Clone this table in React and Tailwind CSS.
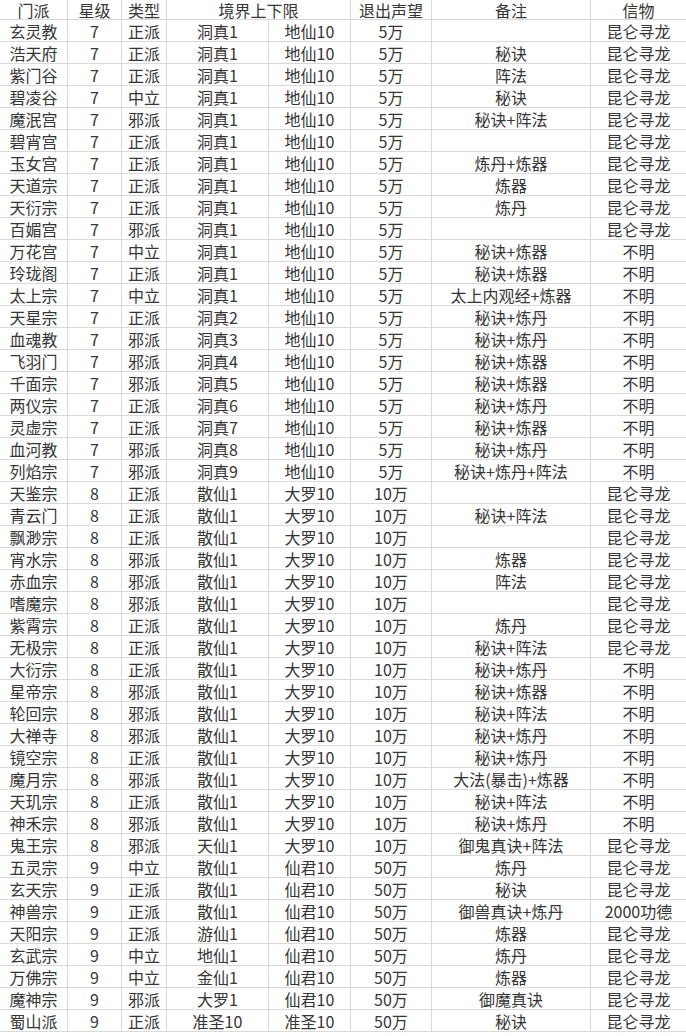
import React from "react";

const rows = [
  ["玄灵教", "7", "正派", "洞真1", "地仙10", "5万", "", "昆仑寻龙"],
  ["浩天府", "7", "正派", "洞真1", "地仙10", "5万", "秘诀", "昆仑寻龙"],
  ["紫门谷", "7", "正派", "洞真1", "地仙10", "5万", "阵法", "昆仑寻龙"],
  ["碧凌谷", "7", "中立", "洞真1", "地仙10", "5万", "秘诀", "昆仑寻龙"],
  ["魔泯宫", "7", "邪派", "洞真1", "地仙10", "5万", "秘诀+阵法", "昆仑寻龙"],
  ["碧宵宫", "7", "正派", "洞真1", "地仙10", "5万", "", "昆仑寻龙"],
  ["玉女宫", "7", "正派", "洞真1", "地仙10", "5万", "炼丹+炼器", "昆仑寻龙"],
  ["天道宗", "7", "正派", "洞真1", "地仙10", "5万", "炼器", "昆仑寻龙"],
  ["天衍宗", "7", "正派", "洞真1", "地仙10", "5万", "炼丹", "昆仑寻龙"],
  ["百媚宫", "7", "邪派", "洞真1", "地仙10", "5万", "", "昆仑寻龙"],
  ["万花宫", "7", "中立", "洞真1", "地仙10", "5万", "秘诀+炼器", "不明"],
  ["玲珑阁", "7", "正派", "洞真1", "地仙10", "5万", "秘诀+炼器", "不明"],
  ["太上宗", "7", "中立", "洞真1", "地仙10", "5万", "太上内观经+炼器", "不明"],
  ["天星宗", "7", "正派", "洞真2", "地仙10", "5万", "秘诀+炼丹", "不明"],
  ["血魂教", "7", "邪派", "洞真3", "地仙10", "5万", "秘诀+炼丹", "不明"],
  ["飞羽门", "7", "邪派", "洞真4", "地仙10", "5万", "秘诀+炼器", "不明"],
  ["千面宗", "7", "邪派", "洞真5", "地仙10", "5万", "秘诀+炼器", "不明"],
  ["两仪宗", "7", "正派", "洞真6", "地仙10", "5万", "秘诀+炼丹", "不明"],
  ["灵虚宗", "7", "正派", "洞真7", "地仙10", "5万", "秘诀+炼器", "不明"],
  ["血河教", "7", "邪派", "洞真8", "地仙10", "5万", "秘诀+炼丹", "不明"],
  ["列焰宗", "7", "邪派", "洞真9", "地仙10", "5万", "秘诀+炼丹+阵法", "不明"],
  ["天鉴宗", "8", "正派", "散仙1", "大罗10", "10万", "", "昆仑寻龙"],
  ["青云门", "8", "正派", "散仙1", "大罗10", "10万", "秘诀+阵法", "昆仑寻龙"],
  ["飘渺宗", "8", "正派", "散仙1", "大罗10", "10万", "", "昆仑寻龙"],
  ["宵水宗", "8", "邪派", "散仙1", "大罗10", "10万", "炼器", "昆仑寻龙"],
  ["赤血宗", "8", "邪派", "散仙1", "大罗10", "10万", "阵法", "昆仑寻龙"],
  ["嗜魔宗", "8", "邪派", "散仙1", "大罗10", "10万", "", "昆仑寻龙"],
  ["紫霄宗", "8", "正派", "散仙1", "大罗10", "10万", "炼丹", "昆仑寻龙"],
  ["无极宗", "8", "正派", "散仙1", "大罗10", "10万", "秘诀+阵法", "昆仑寻龙"],
  ["大衍宗", "8", "正派", "散仙1", "大罗10", "10万", "秘诀+炼丹", "不明"],
  ["星帝宗", "8", "邪派", "散仙1", "大罗10", "10万", "秘诀+炼器", "不明"],
  ["轮回宗", "8", "邪派", "散仙1", "大罗10", "10万", "秘诀+阵法", "不明"],
  ["大禅寺", "8", "邪派", "散仙1", "大罗10", "10万", "秘诀+炼丹", "不明"],
  ["镜空宗", "8", "正派", "散仙1", "大罗10", "10万", "秘诀+炼丹", "不明"],
  ["魔月宗", "8", "邪派", "散仙1", "大罗10", "10万", "大法(暴击)+炼器", "不明"],
  ["天玑宗", "8", "正派", "散仙1", "大罗10", "10万", "秘诀+阵法", "不明"],
  ["神禾宗", "8", "邪派", "散仙1", "大罗10", "10万", "秘诀+炼丹", "不明"],
  ["鬼王宗", "8", "邪派", "天仙1", "大罗10", "10万", "御鬼真诀+阵法", "昆仑寻龙"],
  ["五灵宗", "9", "中立", "散仙1", "仙君10", "50万", "炼丹", "昆仑寻龙"],
  ["玄天宗", "9", "正派", "散仙1", "仙君10", "50万", "秘诀", "昆仑寻龙"],
  ["神兽宗", "9", "正派", "散仙1", "仙君10", "50万", "御兽真诀+炼丹", "2000功德"],
  ["天阳宗", "9", "正派", "游仙1", "仙君10", "50万", "炼器", "昆仑寻龙"],
  ["玄武宗", "9", "中立", "地仙1", "仙君10", "50万", "炼丹", "昆仑寻龙"],
  ["万佛宗", "9", "中立", "金仙1", "仙君10", "50万", "炼器", "昆仑寻龙"],
  ["魔神宗", "9", "邪派", "大罗1", "仙君10", "50万", "御魔真诀", "昆仑寻龙"],
  ["蜀山派", "9", "正派", "准圣10", "准圣10", "50万", "秘诀", "昆仑寻龙"],
];

const cell =
  "flex items-center justify-center whitespace-nowrap border-b border-r border-[#d9d9d9]";

export default function App() {
  return (
    <div
      className="w-[686px] h-[1036px] overflow-hidden bg-white text-[#363636] text-[16px] leading-none"
      style={{ fontFamily: '"Noto Sans CJK SC", "Noto Sans", sans-serif' }}
    >
      <div className="grid grid-cols-[68px_54px_45px_102px_82px_81px_159px_95px] auto-rows-[22px] grid-rows-[20px]">
        <div className={cell}>门派</div>
        <div className={cell}>星级</div>
        <div className={cell}>类型</div>
        <div className={`${cell} col-span-2`}>境界上下限</div>
        <div className={cell}>退出声望</div>
        <div className={cell}>备注</div>
        <div className={`${cell} border-r-0`}>信物</div>
        {rows.map((r, i) =>
          r.map((v, j) => (
            <div
              key={`${i}-${j}`}
              className={j === 7 ? `${cell} border-r-0` : cell}
            >
              {v}
            </div>
          ))
        )}
      </div>
    </div>
  );
}
